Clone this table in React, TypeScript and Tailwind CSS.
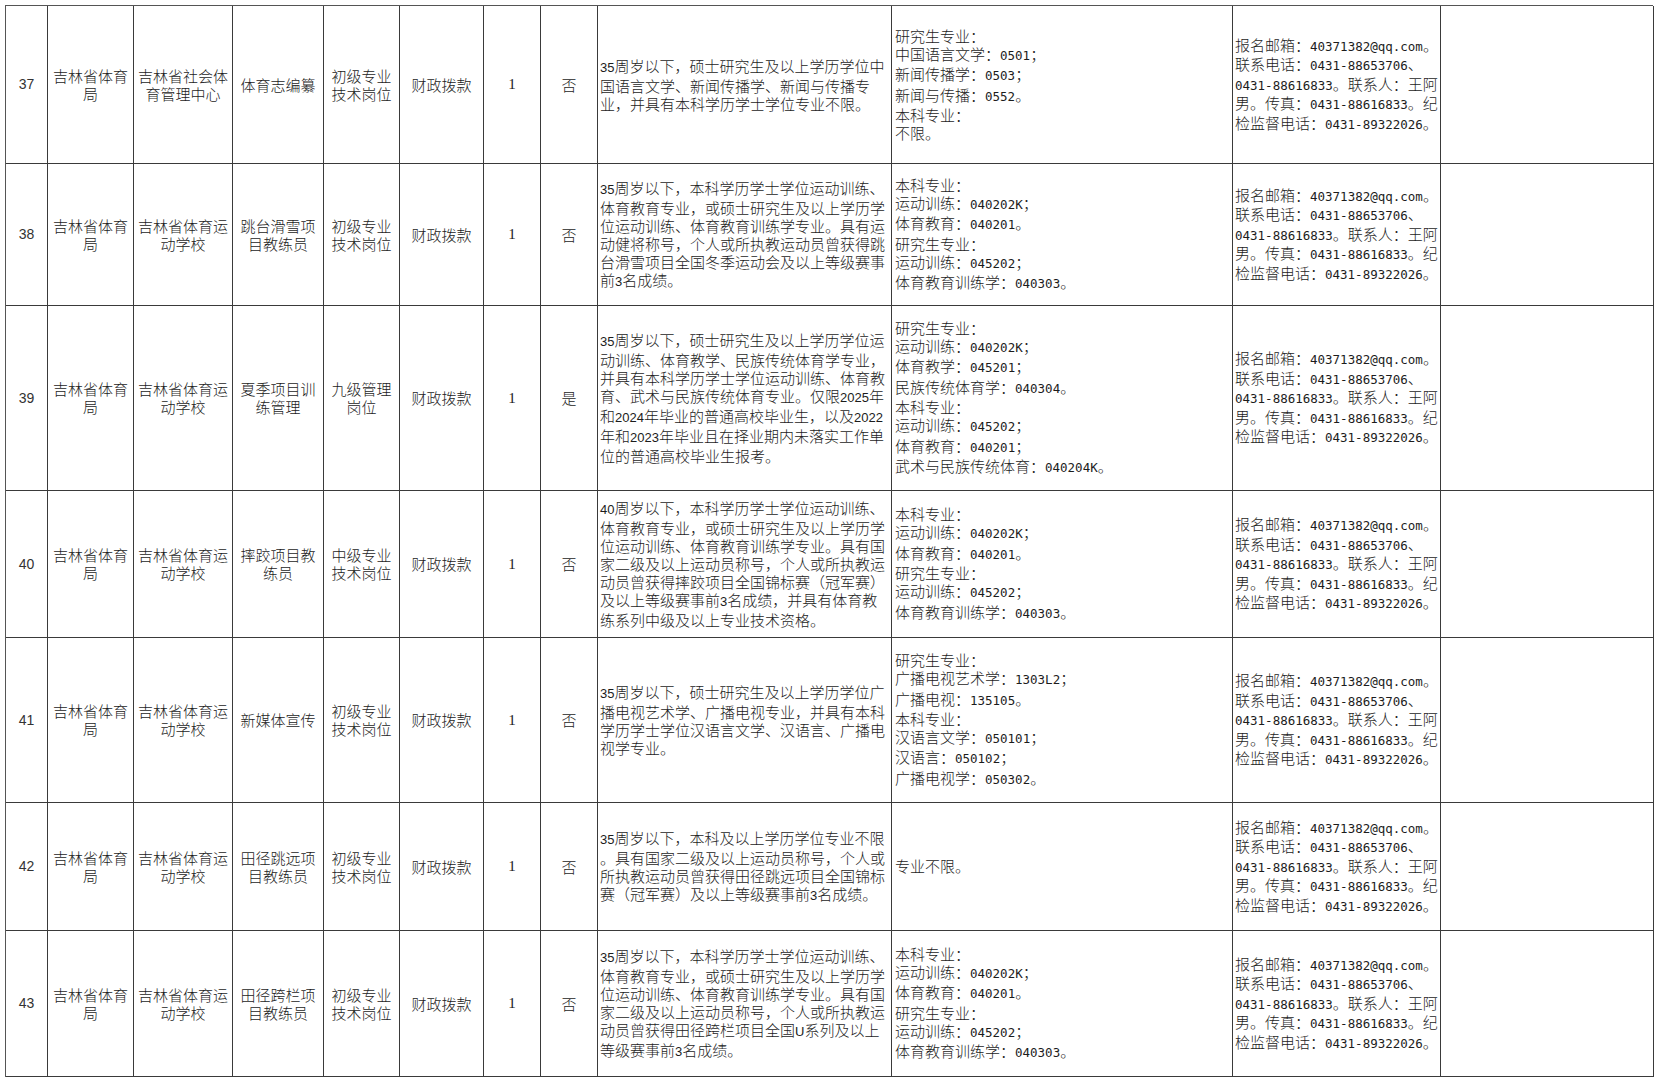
// 招聘岗位表（第37–43行）：吉林省体育局下属单位的岗位、条件、专业与联系方式。
import type { ReactNode } from 'react'

type Row = {
  no: string
  dept: string[]
  unit: string[]
  post: string[]
  kind: string[]
  fund: string
  count: string
  flag: string
  cond: string[]
  major: string[]
  h: string
}

const COLS =
  'grid grid-cols-[42px_86px_99px_91px_76px_84px_57px_57px_294px_341px_208px_213px]'

const CONTACT = [
  '报名邮箱：40371382@qq.com。',
  '联系电话：0431-88653706、',
  '0431-88616833。联系人：王阿',
  '男。传真：0431-88616833。纪',
  '检监督电话：0431-89322026。',
]

const MAJOR_SPORT = [
  '本科专业：',
  '运动训练：040202K；',
  '体育教育：040201。',
  '研究生专业：',
  '运动训练：045202；',
  '体育教育训练学：040303。',
]

const SCHOOL = ['吉林省体育运', '动学校']
const JUNIOR = ['初级专业', '技术岗位']
const DEPT = ['吉林省体育', '局']

const ROWS: Row[] = [
  {
    no: '37',
    dept: DEPT,
    unit: ['吉林省社会体', '育管理中心'],
    post: ['体育志编纂'],
    kind: JUNIOR,
    fund: '财政拨款',
    count: '1',
    flag: '否',
    cond: [
      '35周岁以下，硕士研究生及以上学历学位中',
      '国语言文学、新闻传播学、新闻与传播专',
      '业，并具有本科学历学士学位专业不限。',
    ],
    major: ['研究生专业：', '中国语言文学：0501；', '新闻传播学：0503；', '新闻与传播：0552。', '本科专业：', '不限。'],
    h: 'h-[158px]',
  },
  {
    no: '38',
    dept: DEPT,
    unit: SCHOOL,
    post: ['跳台滑雪项', '目教练员'],
    kind: JUNIOR,
    fund: '财政拨款',
    count: '1',
    flag: '否',
    cond: [
      '35周岁以下，本科学历学士学位运动训练、',
      '体育教育专业，或硕士研究生及以上学历学',
      '位运动训练、体育教育训练学专业。具有运',
      '动健将称号，个人或所执教运动员曾获得跳',
      '台滑雪项目全国冬季运动会及以上等级赛事',
      '前3名成绩。',
    ],
    major: MAJOR_SPORT,
    h: 'h-[142px]',
  },
  {
    no: '39',
    dept: DEPT,
    unit: SCHOOL,
    post: ['夏季项目训', '练管理'],
    kind: ['九级管理', '岗位'],
    fund: '财政拨款',
    count: '1',
    flag: '是',
    cond: [
      '35周岁以下，硕士研究生及以上学历学位运',
      '动训练、体育教学、民族传统体育学专业，',
      '并具有本科学历学士学位运动训练、体育教',
      '育、武术与民族传统体育专业。仅限2025年',
      '和2024年毕业的普通高校毕业生，以及2022',
      '年和2023年毕业且在择业期内未落实工作单',
      '位的普通高校毕业生报考。',
    ],
    major: [
      '研究生专业：',
      '运动训练：040202K；',
      '体育教学：045201；',
      '民族传统体育学：040304。',
      '本科专业：',
      '运动训练：045202；',
      '体育教育：040201；',
      '武术与民族传统体育：040204K。',
    ],
    h: 'h-[185px]',
  },
  {
    no: '40',
    dept: DEPT,
    unit: SCHOOL,
    post: ['摔跤项目教', '练员'],
    kind: ['中级专业', '技术岗位'],
    fund: '财政拨款',
    count: '1',
    flag: '否',
    cond: [
      '40周岁以下，本科学历学士学位运动训练、',
      '体育教育专业，或硕士研究生及以上学历学',
      '位运动训练、体育教育训练学专业。具有国',
      '家二级及以上运动员称号，个人或所执教运',
      '动员曾获得摔跤项目全国锦标赛（冠军赛）',
      '及以上等级赛事前3名成绩，并具有体育教',
      '练系列中级及以上专业技术资格。',
    ],
    major: MAJOR_SPORT,
    h: 'h-[147px]',
  },
  {
    no: '41',
    dept: DEPT,
    unit: SCHOOL,
    post: ['新媒体宣传'],
    kind: JUNIOR,
    fund: '财政拨款',
    count: '1',
    flag: '否',
    cond: [
      '35周岁以下，硕士研究生及以上学历学位广',
      '播电视艺术学、广播电视专业，并具有本科',
      '学历学士学位汉语言文学、汉语言、广播电',
      '视学专业。',
    ],
    major: [
      '研究生专业：',
      '广播电视艺术学：1303L2；',
      '广播电视：135105。',
      '本科专业：',
      '汉语言文学：050101；',
      '汉语言：050102；',
      '广播电视学：050302。',
    ],
    h: 'h-[165px]',
  },
  {
    no: '42',
    dept: DEPT,
    unit: SCHOOL,
    post: ['田径跳远项', '目教练员'],
    kind: JUNIOR,
    fund: '财政拨款',
    count: '1',
    flag: '否',
    cond: [
      '35周岁以下，本科及以上学历学位专业不限',
      '。具有国家二级及以上运动员称号，个人或',
      '所执教运动员曾获得田径跳远项目全国锦标',
      '赛（冠军赛）及以上等级赛事前3名成绩。',
    ],
    major: ['专业不限。'],
    h: 'h-[128px]',
  },
  {
    no: '43',
    dept: DEPT,
    unit: SCHOOL,
    post: ['田径跨栏项', '目教练员'],
    kind: JUNIOR,
    fund: '财政拨款',
    count: '1',
    flag: '否',
    cond: [
      '35周岁以下，本科学历学士学位运动训练、',
      '体育教育专业，或硕士研究生及以上学历学',
      '位运动训练、体育教育训练学专业。具有国',
      '家二级及以上运动员称号，个人或所执教运',
      '动员曾获得田径跨栏项目全国U系列及以上',
      '等级赛事前3名成绩。',
    ],
    major: MAJOR_SPORT,
    h: 'h-[146px]',
  },
]

// 西文部分换成半角宽度的字体，和原表的宋体半角字符宽度接近
const MONO = "font-['DejaVu_Sans_Mono',monospace] text-[12.5px]"
const SANS = "font-['Liberation_Sans',sans-serif] text-[13px]"

function Mixed({ text, latin }: { text: string; latin: string }) {
  const parts = text.split(/([\x20-\x7e]+)/)
  return (
    <>
      {parts.map((p, i) =>
        i % 2 ? (
          <span key={i} className={latin}>
            {p}
          </span>
        ) : (
          p
        ),
      )}
    </>
  )
}

function Cell({ children, className = '' }: { children?: ReactNode; className?: string }) {
  return (
    <div className={`flex items-center border-r border-b border-[#3a3a3a] ${className}`}>
      {children}
    </div>
  )
}

function Center({ lines }: { lines: string[] }) {
  return (
    <Cell className="justify-center text-center leading-[18px]">
      <div>
        {lines.map((l, i) => (
          <div key={i} className="h-[18px] whitespace-nowrap">
            {l}
          </div>
        ))}
      </div>
    </Cell>
  )
}

function Lines({ lines, latin, leading }: { lines: string[]; latin: string; leading: string }) {
  return (
    <div className={leading}>
      {lines.map((l, i) => (
        <div key={i} className="whitespace-nowrap">
          <Mixed text={l} latin={latin} />
        </div>
      ))}
    </div>
  )
}

function TableRow({ r }: { r: Row }) {
  return (
    <div className={`${COLS} ${r.h}`}>
      <Cell className="justify-center">
        <span className="font-['Liberation_Sans',sans-serif] text-[14px] text-[#333]">{r.no}</span>
      </Cell>
      <Center lines={r.dept} />
      <Center lines={r.unit} />
      <Center lines={r.post} />
      <Center lines={r.kind} />
      <Center lines={[r.fund]} />
      <Cell className="justify-center">
        <span className="font-['Liberation_Serif',serif] text-[15px]">{r.count}</span>
      </Cell>
      <Center lines={[r.flag]} />
      <Cell className="pl-[2px]">
        <Lines lines={r.cond} latin={SANS} leading="leading-[18px]" />
      </Cell>
      <Cell className="pl-[3px]">
        <Lines lines={r.major} latin={MONO} leading="leading-[18.3px]" />
      </Cell>
      <Cell className="pl-[2px]">
        <Lines lines={CONTACT} latin={MONO} leading="leading-[17.5px]" />
      </Cell>
      <Cell />
    </div>
  )
}

export default function App() {
  return (
    <div className="h-[1080px] w-[1655px] overflow-hidden bg-white pl-[5px] pt-[5px] font-['Noto_Sans_CJK_SC',sans-serif] text-[15px] font-light text-[#1c1c1c]">
      <div className="w-[1648px] border-t border-l border-[#555]">
        {ROWS.map((r) => (
          <TableRow key={r.no} r={r} />
        ))}
      </div>
    </div>
  )
}
